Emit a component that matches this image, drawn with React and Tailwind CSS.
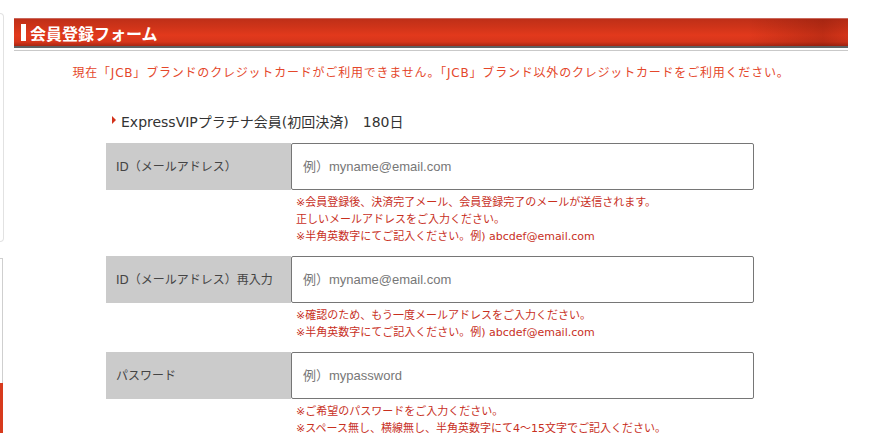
import React from "react";

const font = { fontFamily: '"DejaVu Sans", "Noto Sans CJK JP", sans-serif' };

function Row({ label, placeholder, notes }) {
  return (
    <div>
      <div className="flex h-[47px]">
        <div className="w-[185px] shrink-0 bg-[#cbcbcb] flex items-center pl-[10px] text-[12px] text-[#444]">
          {label}
        </div>
        <div className="w-[463px] shrink-0 border border-[#767676] rounded-[2px] bg-white flex items-center pl-[11px] text-[13px] text-[#777]" style={{ fontFamily: '"Liberation Sans", "Noto Sans CJK JP", sans-serif' }}>
          {placeholder}
        </div>
      </div>
      <div className="pl-[190px] pt-[4px] pb-[11px] text-[11px] leading-[17px] text-[#c8301e]">
        {notes.map((n, i) => (
          <div key={i} className="whitespace-nowrap">{n}</div>
        ))}
      </div>
    </div>
  );
}

export default function App() {
  return (
    <div className="flex w-[871px] h-[433px] overflow-hidden bg-white" style={font}>
      <div className="w-[4px] shrink-0 flex flex-col">
        <div className="h-[13px]" />
        <div className="h-[229px] w-[4px] border border-l-0 border-[#e2e2e2] rounded-r-[4px]" />
        <div className="h-[16px]" />
        <div className="h-[125px] w-[3px] border-r border-t border-[#cfcfcf]" />
        <div className="flex-1 w-[3px] bg-[#d73a1d]" />
      </div>
      <div className="ml-[10px] w-[834px] shrink-0 pt-[18px]">
        <div className="h-[32px] shadow-[0_1px_0_#c9c9c9]">
          <div className="h-[30px] border-t border-[#c9675b] border-b-2 border-b-[#5f6264] bg-[linear-gradient(to_right,rgba(0,0,0,0)_88%,rgba(90,10,0,0.25)_97%,rgba(90,10,0,0.1)_100%),linear-gradient(to_bottom,#bf2f18_0%,#cf3419_30%,#e2391c_60%,#d6361b_85%,#a82613_100%)] flex items-center pl-[7px]">
            <div className="w-[5px] h-[17px] bg-white" />
            <div className="ml-[4px] text-white font-bold text-[16px] leading-none" style={{ fontFamily: '"Noto Sans CJK JP", sans-serif' }}>
              会員登録フォーム
            </div>
          </div>
        </div>
        <div className="mt-[15px] h-[16px] text-center text-[12px] leading-[16px] tracking-[0.8px] text-[#e4472b] whitespace-nowrap">
          現在「JCB」ブランドのクレジットカードがご利用できません。「JCB」ブランド以外のクレジットカードをご利用ください。
        </div>
        <div className="mt-[31px] h-[20px] flex items-center pl-[98px] text-[14px] text-[#333] whitespace-nowrap">
          <svg width="4" height="8" viewBox="0 0 4 8" className="mr-[5px] -mt-[4px]">
            <polygon points="0,0 4,4 0,8" fill="#d3321b" />
          </svg>
          <span>ExpressVIPプラチナ会員(初回決済)　180日</span>
        </div>
        <div className="mt-[11px] pl-[92px]">
          <Row
            label="ID（メールアドレス）"
            placeholder="例）myname@email.com"
            notes={[
              "※会員登録後、決済完了メール、会員登録完了のメールが送信されます。",
              "正しいメールアドレスをご入力ください。",
              "※半角英数字にてご記入ください。例) abcdef@email.com",
            ]}
          />
          <Row
            label="ID（メールアドレス）再入力"
            placeholder="例）myname@email.com"
            notes={[
              "※確認のため、もう一度メールアドレスをご入力ください。",
              "※半角英数字にてご記入ください。例) abcdef@email.com",
            ]}
          />
          <Row
            label="パスワード"
            placeholder="例）mypassword"
            notes={[
              "※ご希望のパスワードをご入力ください。",
              "※スペース無し、横線無し、半角英数字にて4〜15文字でご記入ください。",
            ]}
          />
        </div>
      </div>
    </div>
  );
}
